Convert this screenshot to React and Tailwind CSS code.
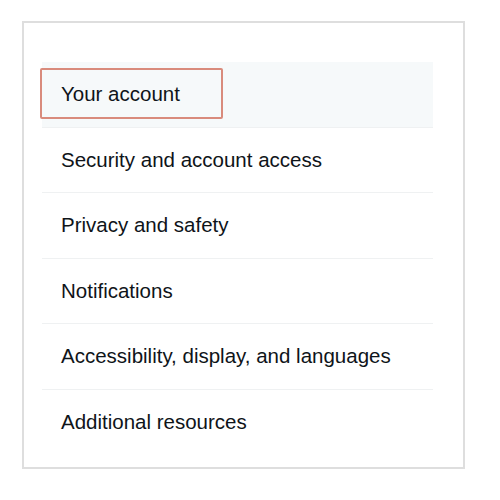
import React from 'react';

const items = [
  'Your account',
  'Security and account access',
  'Privacy and safety',
  'Notifications',
  'Accessibility, display, and languages',
  'Additional resources',
];

const SettingsRow = ({ label, active, last }) => (
  <div
    className={`relative flex items-center h-[65.5px] px-[19px] ${
      last ? '' : 'border-b border-[#eff1f2]'
    } ${active ? 'bg-[#f6f9fa]' : ''}`}
  >
    {active && (
      <div className="absolute left-[-2px] top-[6px] w-[183px] h-[51px] border-2 border-[#d98b7c] rounded-[2px]" />
    )}
    <span className="text-[20.5px] text-[#0f1419] leading-none">{label}</span>
  </div>
);

const App = () => {
  return (
    <div
      className="w-[500px] h-[500px] bg-white pt-[21px] pl-[22px]"
      style={{ fontFamily: '"Liberation Sans", Arial, sans-serif' }}
    >
      <div className="w-[443px] h-[448px] border-2 border-[#dedede] pt-[39px] pl-[18px] pr-[30px]">
        {items.map((label, i) => (
          <SettingsRow
            key={label}
            label={label}
            active={i === 0}
            last={i === items.length - 1}
          />
        ))}
      </div>
    </div>
  );
};

export default App;
